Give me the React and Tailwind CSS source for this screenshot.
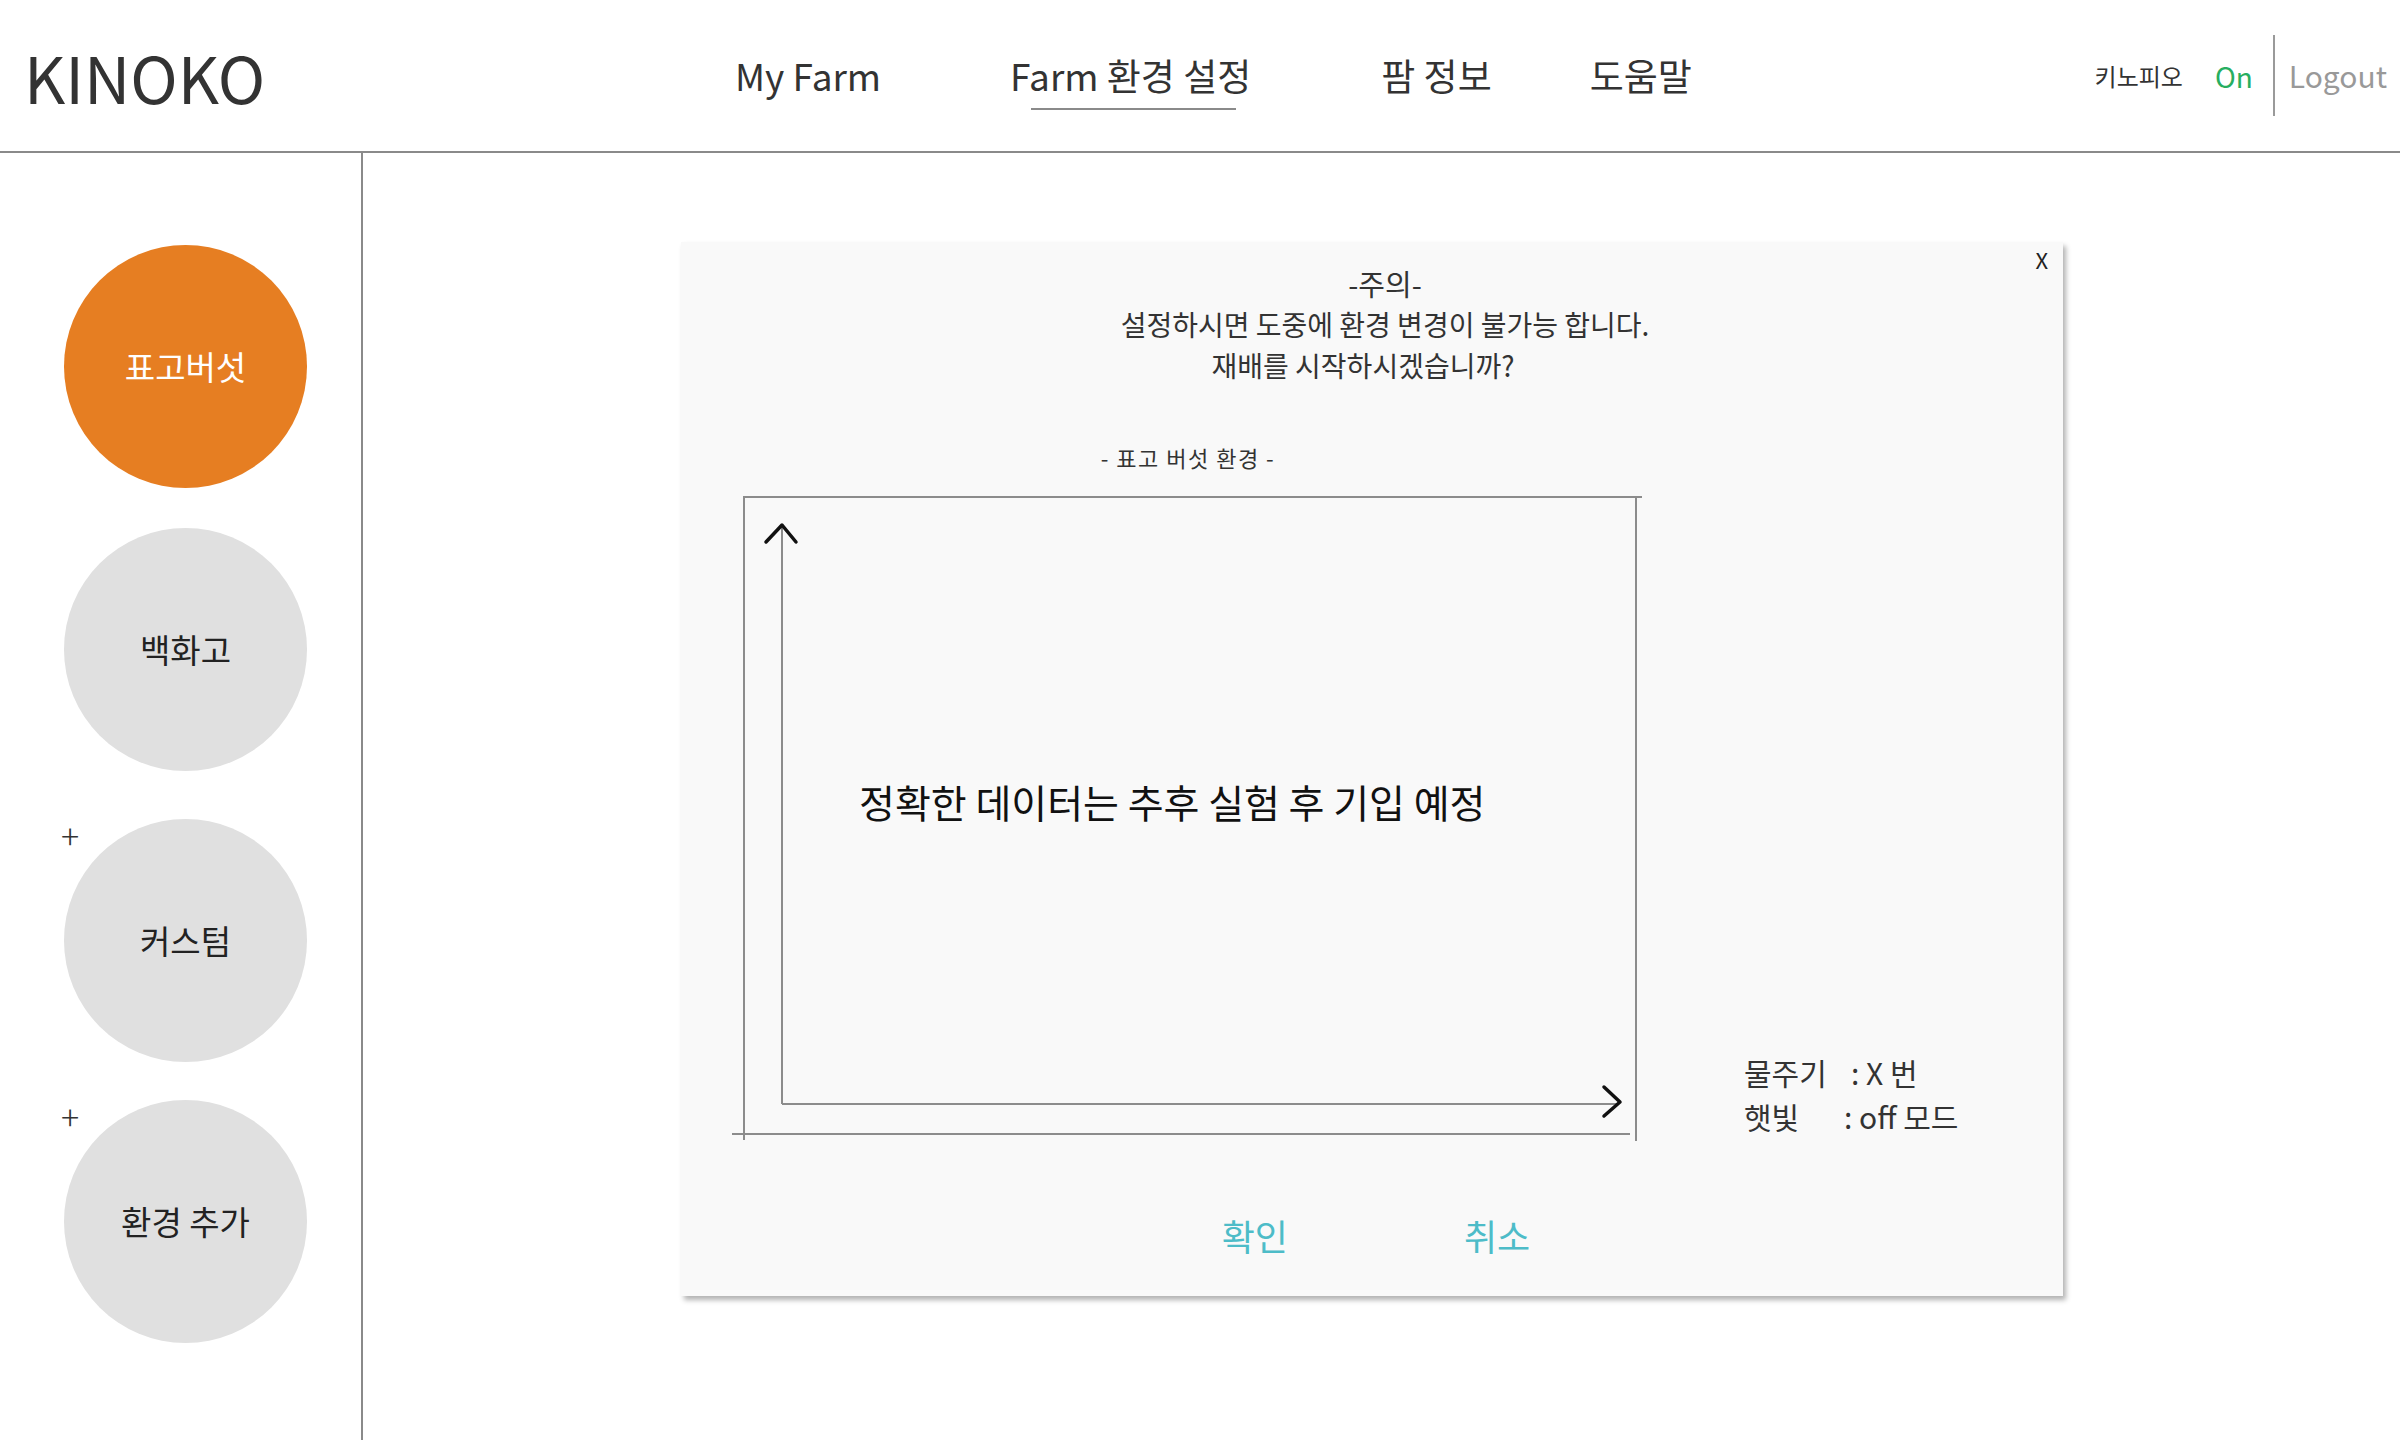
import React from 'react';

const font = { fontFamily: '"Noto Sans CJK KR", "Noto Sans", sans-serif' };

const menus = [
  { label: '표고버섯', active: true },
  { label: '백화고' },
  { label: '커스텀', plus: true },
  { label: '환경 추가', plus: true },
];

const menuGaps = ['mt-[92px]', 'mt-[40px]', 'mt-[48px]', 'mt-[38px]'];

const Chart = () => (
  <div className="relative mt-[24px] w-[916px] h-[650px]">
    <svg width="916" height="650" viewBox="0 0 916 650" className="block">
      <g stroke="#8c8c8c" strokeWidth="2" fill="none">
        <line x1="13" y1="2" x2="912" y2="2" />
        <line x1="14" y1="2" x2="14" y2="645" />
        <line x1="906" y1="2" x2="906" y2="646" />
        <line x1="2" y1="639" x2="900" y2="639" />
        <line x1="52" y1="30" x2="52" y2="609" />
        <line x1="52" y1="609" x2="888" y2="609" />
      </g>
      <g stroke="#111" strokeWidth="3.5" fill="none" strokeLinecap="round" strokeLinejoin="round">
        <polyline points="36,47 52,30 66,47" />
        <polyline points="874,592 890,607 874,621" />
      </g>
    </svg>
    <p className="absolute left-[129px] top-[280px] text-[39px] leading-[52px] text-[#111] whitespace-nowrap">
      정확한 데이터는 추후 실험 후 기입 예정
    </p>
  </div>
);

const App = () => {
  return (
    <div className="h-screen flex flex-col bg-white text-[#333]" style={font}>
      <header className="h-[153px] shrink-0 flex items-center border-b-2 border-[#8a8a8a]">
        <div className="w-[735px] pl-[24px]">
          <h1 className="text-[64px] leading-none text-[#333]">KINOKO</h1>
        </div>
        <nav className="flex items-center text-[37px] text-[#333]">
          <a className="block">My Farm</a>
          <a className="block relative ml-[129px]">
            Farm 환경 설정
            <span className="absolute left-[21px] right-[15px] top-[60px] h-[2px] bg-[#8a8a8a]" />
          </a>
          <a className="block ml-[130px]">팜 정보</a>
          <a className="block ml-[98px]">도움말</a>
        </nav>
        <div className="ml-auto flex items-center pr-[13px]">
          <span className="text-[24px]">키노피오</span>
          <span className="ml-[32px] text-[28px] text-[#27ae60]">On</span>
          <span className="ml-[20px] w-[2px] h-[81px] bg-[#9a9a9a]" />
          <span className="ml-[14px] text-[30px] text-[#999]">Logout</span>
        </div>
      </header>

      <div className="flex-1 flex min-h-0">
        <aside className="w-[363px] shrink-0 border-r-2 border-[#8a8a8a] pl-[64px] flex flex-col">
          {menus.map((m, i) => (
            <div key={m.label} className={`relative ${menuGaps[i]}`}>
              <button
                className={`w-[243px] h-[243px] rounded-full flex items-center justify-center text-[33px] ${
                  m.active ? 'bg-[#e67e22] text-white' : 'bg-[#e0e0e0] text-[#222]'
                }`}
              >
                {m.label}
              </button>
              {m.plus && (
                <span className="absolute -left-[3px] top-[-4px] text-[34px] leading-[40px] font-light text-[#333]">+</span>
              )}
            </div>
          ))}
        </aside>

        <main className="flex-1 pl-[318px] pt-[89px]">
          <div className="relative w-[1382px] h-[1054px] bg-[#f9f9f9] shadow-[3px_4px_5px_rgba(0,0,0,0.3)] flex flex-col">
            <button className="absolute top-[2px] right-[15px] text-[22px] leading-[30px] text-[#222]">X</button>

            <div className="pt-[21px] pl-[26px] text-center text-[28px] leading-[41px] text-[#333]">
              <p className="text-[29px]">-주의-</p>
              <p>설정하시면 도중에 환경 변경이 불가능 합니다.</p>
              <p className="pr-[44px]">재배를 시작하시겠습니까?</p>
            </div>

            <div className="flex items-end mt-[57px] pl-[49px]">
              <div className="flex flex-col">
                <p className="text-center text-[22px] leading-[28px] tracking-[1.5px] text-[#333]">- 표고 버섯 환경 -</p>
                <Chart />
              </div>
              <div className="ml-[98px] text-[30px] leading-[44px] text-[#333] pb-[7px]">
                <div className="flex">
                  <span className="w-[107px]">물주기</span>
                  <span>: X 번</span>
                </div>
                <div className="flex">
                  <span className="w-[100px]">햇빛</span>
                  <span>: off 모드</span>
                </div>
              </div>
            </div>

            <div className="mt-auto pb-[37px] pl-[8px] flex justify-center gap-[176px] text-[36px] leading-[48px] text-[#4dbcc8]">
              <button>확인</button>
              <button>취소</button>
            </div>
          </div>
        </main>
      </div>
    </div>
  );
};

export default App;
